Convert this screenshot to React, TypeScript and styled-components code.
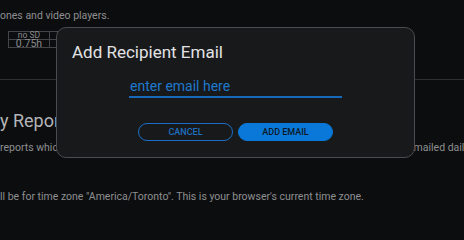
import React from "react";
import styled, { createGlobalStyle } from "styled-components";

const Global = createGlobalStyle`
  html, body { margin: 0; padding: 0; background: #0c0d0f; }
  body { font-family: Roboto, "Liberation Sans", sans-serif; overflow: hidden; width: 464px; height: 202px; }
  * { box-sizing: border-box; }
`;

const Page = styled.div`
  width: 464px;
  height: 202px;
  overflow: hidden;
  padding-top: 9px;
  display: flex;
  flex-direction: column;
  align-items: flex-start;
`;

const Line = styled.p<{ $top?: number }>`
  margin: ${(p) => p.$top ?? 0}px 0 0 0;
  font-size: 10.5px;
  line-height: 14px;
  color: #8e8f91;
  white-space: nowrap;
  display: flex;
`;

const Clip = styled.span<{ $w: number }>`
  display: inline-block;
  width: ${(p) => p.$w}px;
  overflow: hidden;
  flex: none;
`;

const Table = styled.table`
  margin: 8px 0 0 8px;
  border-collapse: collapse;
  color: #8a8b8d;
  table-layout: fixed;
`;

const Cell = styled.td<{ $w: number; $size: number }>`
  border: 1px solid #444548;
  width: ${(p) => p.$w}px;
  height: 8px;
  padding: 0;
  text-align: center;
  font-size: ${(p) => p.$size}px;
  line-height: 7px;
  overflow: visible;
`;

const Rule = styled.hr`
  margin: 31px 0 0 0;
  border: none;
  border-top: 1px solid #2e2f31;
  width: 100%;
  align-self: stretch;
`;

const Heading = styled.h2`
  margin: 30px 0 0 0;
  font-size: 18px;
  line-height: 22px;
  font-weight: 400;
  color: #b4b5b7;
  white-space: nowrap;
`;

const Dialog = styled.div`
  position: fixed;
  left: 56px;
  top: 27px;
  width: 359px;
  height: 131px;
  background: #18191b;
  border: 1px solid #4b4c4f;
  border-radius: 10px;
  padding: 14px 15px 16px;
  display: flex;
  flex-direction: column;
`;

const Title = styled.h3`
  margin: 0;
  font-size: 17px;
  line-height: 20px;
  font-weight: 400;
  color: #e2e3e5;
`;

const EmailInput = styled.input`
  align-self: center;
  margin: 14px 0 0 0;
  width: 213px;
  height: 22px;
  padding: 0 0 0 1px;
  border: none;
  border-bottom: 2px solid #1767bb;
  background: transparent;
  outline: none;
  font-family: Roboto, "Liberation Sans", sans-serif;
  font-size: 14px;
  color: #1f78cc;
  &::placeholder { color: #1f78cc; opacity: 1; }
`;

const Actions = styled.div`
  margin-top: 25px;
  display: flex;
  justify-content: center;
  gap: 5px;
`;

const Button = styled.button<{ $primary?: boolean }>`
  width: 95px;
  height: 18px;
  border-radius: 9px;
  border: 1px solid ${(p) => (p.$primary ? "#0a78d8" : "#1a6fc4")};
  background: ${(p) => (p.$primary ? "#0a78d8" : "transparent")};
  color: ${(p) => (p.$primary ? "#0c1826" : "#1f6fc0")};
  font-family: Roboto, "Liberation Sans", sans-serif;
  font-size: 9px;
  font-weight: 500;
  text-transform: uppercase;
  padding: 0;
  line-height: 16px;
`;

export default function App() {
  return (
    <>
      <Global />
      <Page>
        <Line>ones and video players.</Line>
        <Table>
          <tbody>
            <tr>
              <Cell $w={41} $size={8.5}>no SD</Cell>
              <Cell $w={8} $size={8.5}></Cell>
            </tr>
            <tr>
              <Cell $w={41} $size={10.5}>0.75h</Cell>
              <Cell $w={8} $size={10.5}></Cell>
            </tr>
          </tbody>
        </Table>
        <Rule />
        <Heading>y Reports</Heading>
        <Line $top={9}>
          <Clip $w={408}>reports which summarize your viewing activity will be</Clip>
          <span>emailed daily.</span>
        </Line>
        <Line $top={35}>
          ll be for time zone "America/Toronto". This is your browser's current time zone.
        </Line>
      </Page>
      <Dialog>
        <Title>Add Recipient Email</Title>
        <EmailInput placeholder="enter email here" />
        <Actions>
          <Button>Cancel</Button>
          <Button $primary>Add Email</Button>
        </Actions>
      </Dialog>
    </>
  );
}
